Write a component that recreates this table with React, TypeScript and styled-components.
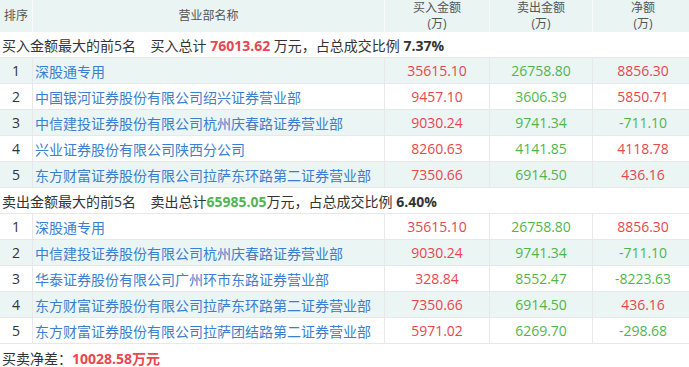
import styled, { createGlobalStyle } from "styled-components";

const GlobalStyle = createGlobalStyle`
  html, body {
    margin: 0;
    padding: 0;
    background: #fff;
  }
  body {
    font-family: "Open Sans", "Noto Sans CJK SC", sans-serif;
    color: #333;
  }
`;

const Table = styled.table`
  width: 689px;
  border-collapse: collapse;
  table-layout: fixed;
  font-size: 14px;
`;

const HeadCell = styled.th<{ w: number }>`
  width: ${(p) => p.w}px;
  height: 32px;
  padding: 0;
  background: #eaf4f2;
  color: #555;
  font-size: 12px;
  font-weight: normal;
  line-height: 16px;
  text-align: center;
  border-left: 1px solid #f6fafa;
  &:first-child {
    border-left: none;
  }
`;

const HeadLine = styled.span`
  display: block;
  height: 16px;
  line-height: 16px;
`;

const TitleCell = styled.td`
  height: 25px;
  padding: 0 0 0 2px;
  color: #333;
  border-bottom: 1px solid #e8e8e8;
  white-space: nowrap;
`;

const Row = styled.tr<{ striped: boolean }>`
  background: ${(p) => (p.striped ? "#ebf5f3" : "#fff")};
`;

const Cell = styled.td<{ align?: string; tone?: "red" | "green" | "blue" }>`
  height: 25px;
  padding: 0 2px;
  text-align: ${(p) => p.align || "center"};
  color: ${(p) =>
    p.tone === "red" ? "#e8474f" : p.tone === "green" ? "#4fb64f" : p.tone === "blue" ? "#3a7fd1" : "#333"};
  border-bottom: 1px solid #e8e8e8;
  border-left: 1px solid #e8e8e8;
  white-space: nowrap;
  overflow: hidden;
  &:first-child {
    border-left: none;
  }
`;

const Strong = styled.b<{ tone?: "red" | "green" }>`
  font-weight: bold;
  color: ${(p) => (p.tone === "red" ? "#e8474f" : p.tone === "green" ? "#56b352" : "#333")};
`;

const Footer = styled.div`
  padding: 4px 0 0 2px;
  font-size: 14px;
  color: #333;
`;

type Item = [string, string, string, string];

const buyRows: Item[] = [
  ["深股通专用", "35615.10", "26758.80", "8856.30"],
  ["中国银河证券股份有限公司绍兴证券营业部", "9457.10", "3606.39", "5850.71"],
  ["中信建投证券股份有限公司杭州庆春路证券营业部", "9030.24", "9741.34", "-711.10"],
  ["兴业证券股份有限公司陕西分公司", "8260.63", "4141.85", "4118.78"],
  ["东方财富证券股份有限公司拉萨东环路第二证券营业部", "7350.66", "6914.50", "436.16"],
];

const sellRows: Item[] = [
  ["深股通专用", "35615.10", "26758.80", "8856.30"],
  ["中信建投证券股份有限公司杭州庆春路证券营业部", "9030.24", "9741.34", "-711.10"],
  ["华泰证券股份有限公司广州环市东路证券营业部", "328.84", "8552.47", "-8223.63"],
  ["东方财富证券股份有限公司拉萨东环路第二证券营业部", "7350.66", "6914.50", "436.16"],
  ["东方财富证券股份有限公司拉萨团结路第二证券营业部", "5971.02", "6269.70", "-298.68"],
];

const DataRows = ({ rows, stripeFirst }: { rows: Item[]; stripeFirst: boolean }) => (
  <>
    {rows.map((r, i) => (
      <Row key={i} striped={stripeFirst ? i % 2 === 0 : i % 2 === 1}>
        <Cell>{i + 1}</Cell>
        <Cell align="left" tone="blue">{r[0]}</Cell>
        <Cell tone="red">{r[1]}</Cell>
        <Cell tone="green">{r[2]}</Cell>
        <Cell tone={r[3].startsWith("-") ? "green" : "red"}>{r[3]}</Cell>
      </Row>
    ))}
  </>
);

const App = () => {
  return (
    <>
      <GlobalStyle />
      <Table>
        <thead>
          <tr>
            <HeadCell w={32}>排序</HeadCell>
            <HeadCell w={351}>营业部名称</HeadCell>
            <HeadCell w={104}>
              <HeadLine>买入金额</HeadLine>
              <HeadLine>(万)</HeadLine>
            </HeadCell>
            <HeadCell w={102}>
              <HeadLine>卖出金额</HeadLine>
              <HeadLine>(万)</HeadLine>
            </HeadCell>
            <HeadCell w={100}>
              <HeadLine>净额</HeadLine>
              <HeadLine>(万)</HeadLine>
            </HeadCell>
          </tr>
        </thead>
        <tbody>
          <tr>
            <TitleCell colSpan={5}>
              买入金额最大的前5名&nbsp;&nbsp;&nbsp; 买入总计 <Strong tone="red">76013.62</Strong> 万元，占总成交比例{" "}
              <Strong>7.37%</Strong>
            </TitleCell>
          </tr>
          <DataRows rows={buyRows} stripeFirst />
          <tr>
            <TitleCell colSpan={5}>
              卖出金额最大的前5名&nbsp;&nbsp;&nbsp; 卖出总计<Strong tone="green">65985.05</Strong>万元，占总成交比例{" "}
              <Strong>6.40%</Strong>
            </TitleCell>
          </tr>
          <DataRows rows={sellRows} stripeFirst={false} />
        </tbody>
      </Table>
      <Footer>
        买卖净差：<Strong tone="red">10028.58万元</Strong>
      </Footer>
    </>
  );
};

export default App;
